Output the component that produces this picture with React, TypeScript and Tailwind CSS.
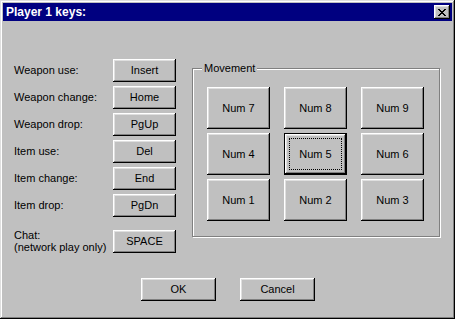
import React from 'react'

const bevel =
  'shadow-[inset_-1px_-1px_#000,inset_1px_1px_#fff,inset_-2px_-2px_#808080,inset_2px_2px_#dfdfdf]'

function Btn({ label, w, h, focused }: { label: string; w: string; h: string; focused?: boolean }) {
  return (
    <button
      className={`relative ${w} ${h} bg-[#c0c0c0] text-black text-[11px] flex items-center justify-center ${bevel} ${
        focused ? 'border border-black' : ''
      }`}
    >
      {focused && <span className="absolute inset-[4px] border border-dotted border-black" />}
      <span className="relative">{label}</span>
    </button>
  )
}

const keys = [
  ['Weapon use:', 'Insert'],
  ['Weapon change:', 'Home'],
  ['Weapon drop:', 'PgUp'],
  ['Item use:', 'Del'],
  ['Item change:', 'End'],
  ['Item drop:', 'PgDn'],
]

const pad = ['Num 7', 'Num 8', 'Num 9', 'Num 4', 'Num 5', 'Num 6', 'Num 1', 'Num 2', 'Num 3']

export default function App() {
  return (
    <div
      className="w-[455px] h-[319px] bg-[#c0c0c0] p-[3px] flex flex-col shadow-[inset_-1px_-1px_#000,inset_1px_1px_#dfdfdf,inset_-2px_-2px_#808080,inset_2px_2px_#fff]"
      style={{ fontFamily: '"Liberation Sans", Arial, sans-serif' }}
    >
      {/* title bar */}
      <div className="h-[18px] bg-[#000080] flex items-center justify-between pl-[3px] pr-[2px]">
        <span className="text-white font-bold text-[12px] leading-none">Player 1 keys:</span>
        <div className={`w-[16px] h-[14px] bg-[#c0c0c0] flex items-center justify-center ${bevel}`}>
          <svg width="8" height="7" viewBox="0 0 8 7" shapeRendering="crispEdges">
            <path d="M0 0h2v1h-2zM6 0h2v1h-2zM1 1h2v1h-2zM5 1h2v1h-2zM2 2h4v1h-4zM3 3h2v1h-2zM2 4h4v1h-4zM1 5h2v1h-2zM5 5h2v1h-2zM0 6h2v1h-2zM6 6h2v1h-2z" fill="#000" />
          </svg>
        </div>
      </div>

      <div className="flex pl-[11px] pt-[38px]">
        {/* key list */}
        <div className="flex flex-col">
          <div className="flex flex-col gap-[4px]">
            {keys.map(([l, k]) => (
              <div key={l} className="flex items-center">
                <span className="w-[99px] text-[11px] text-black">{l}</span>
                <Btn label={k} w="w-[63px]" h="h-[23px]" />
              </div>
            ))}
          </div>
          <div className="flex items-center mt-[12px]">
            <span className="w-[99px] text-[11px] text-black leading-[12px]">
              Chat:
              <br />
              (network play only)
            </span>
            <Btn label="SPACE" w="w-[63px]" h="h-[23px]" />
          </div>
        </div>

        {/* movement group */}
        <div className="relative ml-[16px] mt-[9px] w-[248px] h-[169px] border border-[#808080] shadow-[1px_1px_#fff,inset_1px_1px_#fff]">
          <span className="absolute left-[9px] top-[-8px] bg-[#c0c0c0] px-[2px] text-[11px] leading-[14px] text-black">
            Movement
          </span>
          <div className="grid grid-cols-[63px_63px_63px] gap-x-[14px] gap-y-[4px] pl-[14px] pt-[18px]">
            {pad.map(p => (
              <Btn key={p} label={p} w="w-[63px]" h="h-[42px]" focused={p === 'Num 5'} />
            ))}
          </div>
        </div>
      </div>

      <div className="flex justify-center gap-[24px] mt-[25px] pl-[1px]">
        <Btn label="OK" w="w-[75px]" h="h-[23px]" />
        <Btn label="Cancel" w="w-[75px]" h="h-[23px]" />
      </div>
    </div>
  )
}
